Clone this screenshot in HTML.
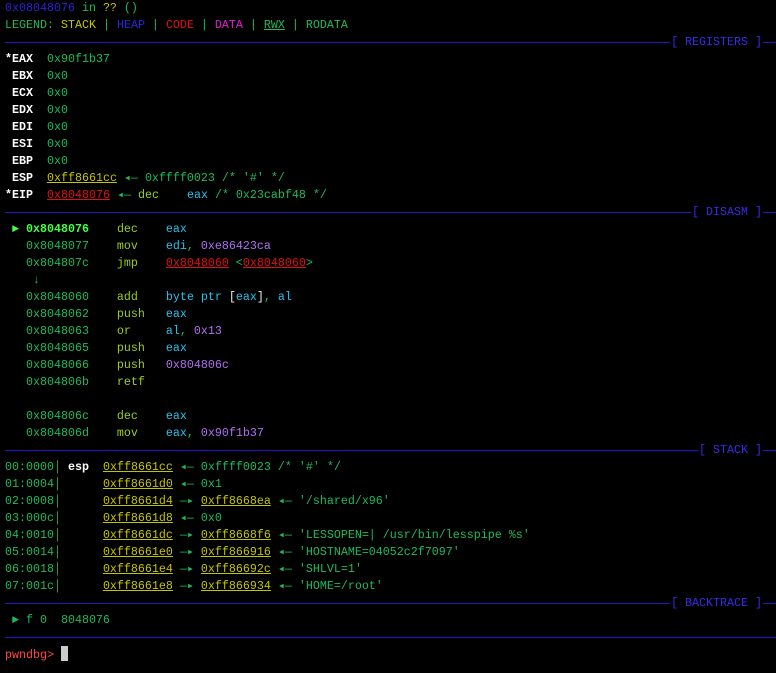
<!DOCTYPE html>
<html><head><meta charset="utf-8"><style>
html,body{margin:0;padding:0;background:#000;width:776px;height:673px;overflow:hidden}
body{font-family:"Liberation Mono","DejaVu Sans Mono",monospace;font-size:11.67px;color:#1dba5c}
.l{height:17px;line-height:17px;white-space:pre;padding-left:5px;position:relative}
.sep{height:17px;position:relative}
.sep:before{content:"";position:absolute;left:5px;right:0;top:8px;height:1px;background:#2a12c4}
.sep span{position:absolute;right:13px;top:0;line-height:17px;background:#000;color:#3a2ae8;white-space:pre;padding:0 1px}
.g{color:#1dba5c}.y{color:#c4c400}.yu{color:#c4c400;text-decoration:underline}
.r{color:#e01010}.ru{color:#e01010;text-decoration:underline}
.m{color:#e020d0}.b{color:#3020d8}.w{color:#fff;font-weight:bold}
.lg{color:#44ff44;font-weight:bold}.lm{color:#9ccd1e}.c{color:#28c0e8}.p{color:#b070f0}
.wh{color:#eee}.pr{color:#ff4848}
.cur{display:inline-block;width:7px;height:15px;background:#ccc;vertical-align:-3px}
</style></head><body>
<div class="l"><span class="b">0x08048076</span> in <span class="y">??</span> ()</div>
<div class="l">LEGEND: <span class="y">STACK</span> | <span class="b">HEAP</span> | <span class="r">CODE</span> | <span class="m">DATA</span> | <u>RWX</u> | RODATA</div>
<div class="sep"><span>[ REGISTERS ]</span></div>
<div class="l"><span class="w">*EAX</span>  0x90f1b37</div>
<div class="l"><span class="w"> EBX</span>  0x0</div>
<div class="l"><span class="w"> ECX</span>  0x0</div>
<div class="l"><span class="w"> EDX</span>  0x0</div>
<div class="l"><span class="w"> EDI</span>  0x0</div>
<div class="l"><span class="w"> ESI</span>  0x0</div>
<div class="l"><span class="w"> EBP</span>  0x0</div>
<div class="l"><span class="w"> ESP</span>  <span class="yu">0xff8661cc</span> ◂— 0xffff0023 /* '#' */</div>
<div class="l"><span class="w">*EIP</span>  <span class="ru">0x8048076</span> ◂— <span class="lm">dec</span>    <span class="c">eax</span> /* 0x23cabf48 */</div>
<div class="sep"><span>[ DISASM ]</span></div>
<div class="l"><span class="lg"> ► 0x8048076</span>    <span class="lm">dec</span>    <span class="c">eax</span></div>
<div class="l">   0x8048077    <span class="lm">mov</span>    <span class="c">edi</span>, <span class="p">0xe86423ca</span></div>
<div class="l">   0x804807c    <span class="lm">jmp</span>    <span class="ru">0x8048060</span> &lt;<span class="ru">0x8048060</span>&gt;</div>
<div class="l">    ↓</div>
<div class="l">   0x8048060    <span class="lm">add</span>    <span class="c">byte ptr </span><span class="wh">[</span><span class="c">eax</span><span class="wh">]</span>, <span class="c">al</span></div>
<div class="l">   0x8048062    <span class="lm">push</span>   <span class="c">eax</span></div>
<div class="l">   0x8048063    <span class="lm">or</span>     <span class="c">al</span>, <span class="p">0x13</span></div>
<div class="l">   0x8048065    <span class="lm">push</span>   <span class="c">eax</span></div>
<div class="l">   0x8048066    <span class="lm">push</span>   <span class="p">0x804806c</span></div>
<div class="l">   0x804806b    <span class="lm">retf</span></div>
<div class="l"> </div>
<div class="l">   0x804806c    <span class="lm">dec</span>    <span class="c">eax</span></div>
<div class="l">   0x804806d    <span class="lm">mov</span>    <span class="c">eax</span>, <span class="p">0x90f1b37</span></div>
<div class="sep"><span>[ STACK ]</span></div>
<div class="l">00:0000│ <span class="w">esp</span>  <span class="yu">0xff8661cc</span> ◂— 0xffff0023 /* '#' */</div>
<div class="l">01:0004│      <span class="yu">0xff8661d0</span> ◂— 0x1</div>
<div class="l">02:0008│      <span class="yu">0xff8661d4</span> —▸ <span class="yu">0xff8668ea</span> ◂— '/shared/x96'</div>
<div class="l">03:000c│      <span class="yu">0xff8661d8</span> ◂— 0x0</div>
<div class="l">04:0010│      <span class="yu">0xff8661dc</span> —▸ <span class="yu">0xff8668f6</span> ◂— 'LESSOPEN=| /usr/bin/lesspipe %s'</div>
<div class="l">05:0014│      <span class="yu">0xff8661e0</span> —▸ <span class="yu">0xff866916</span> ◂— 'HOSTNAME=04052c2f7097'</div>
<div class="l">06:0018│      <span class="yu">0xff8661e4</span> —▸ <span class="yu">0xff86692c</span> ◂— 'SHLVL=1'</div>
<div class="l">07:001c│      <span class="yu">0xff8661e8</span> —▸ <span class="yu">0xff866934</span> ◂— 'HOME=/root'</div>
<div class="sep"><span>[ BACKTRACE ]</span></div>
<div class="l"> ► f 0  8048076</div>
<div class="sep" style="height:17px"></div>
<div class="l"><span class="pr">pwndbg&gt;</span> <span class="cur"></span></div>
</body></html>
